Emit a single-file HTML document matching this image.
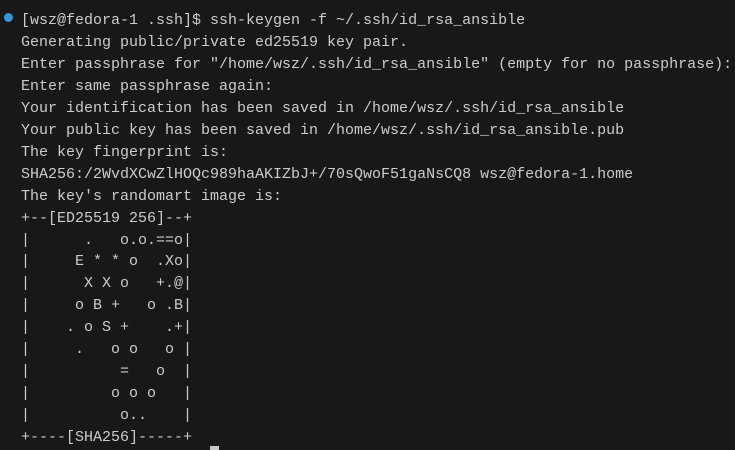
<!DOCTYPE html>
<html><head><meta charset="utf-8"><style>
html,body{margin:0;padding:0;background:#181818;width:735px;height:450px;overflow:hidden}
pre{position:absolute;left:21px;top:10px;margin:0;font-family:"Liberation Mono",monospace;font-size:15px;line-height:21.95px;color:#cccccc;white-space:pre}
.dot{position:absolute;left:4px;top:13px;width:9px;height:9px;border-radius:50%;background:#3794d6}
.cur{position:absolute;left:210px;top:446px;width:9px;height:4px;background:#c8c8c8}
</style></head><body>
<div class="dot"></div>
<pre>[wsz@fedora-1 .ssh]$ ssh-keygen -f ~/.ssh/id_rsa_ansible
Generating public/private ed25519 key pair.
Enter passphrase for "/home/wsz/.ssh/id_rsa_ansible" (empty for no passphrase):
Enter same passphrase again:
Your identification has been saved in /home/wsz/.ssh/id_rsa_ansible
Your public key has been saved in /home/wsz/.ssh/id_rsa_ansible.pub
The key fingerprint is:
SHA256:/2WvdXCwZlHOQc989haAKIZbJ+/70sQwoF51gaNsCQ8 wsz@fedora-1.home
The key's randomart image is:
+--[ED25519 256]--+
|      .   o.o.==o|
|     E * * o  .Xo|
|      X X o   +.@|
|     o B +   o .B|
|    . o S +    .+|
|     .   o o   o |
|          =   o  |
|         o o o   |
|          o..    |
+----[SHA256]-----+</pre>
<div class="cur"></div>
</body></html>
